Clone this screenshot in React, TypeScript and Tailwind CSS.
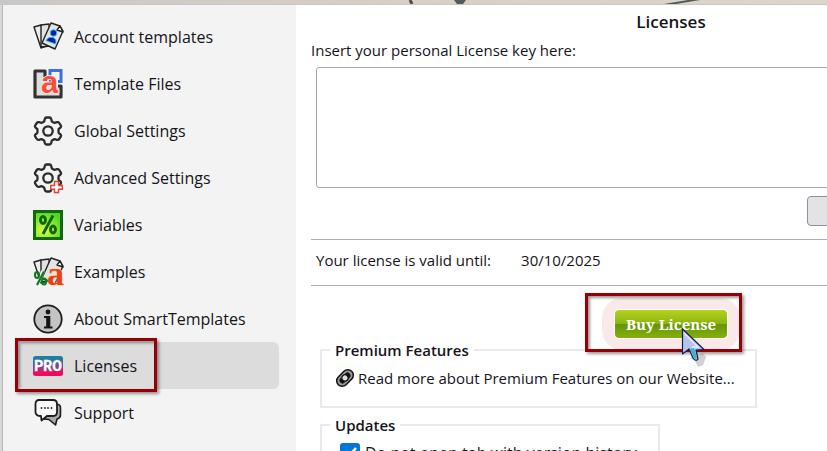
import type { ReactNode } from "react";

function Cards() {
  return (
    <g stroke="#222" strokeWidth="1.4" strokeLinejoin="round">
      <path d="M1 5L8 3L13 24L8 26Z" fill="#ececec" />
      <path d="M8 3L16 2L17 24L8 25Z" fill="#e2e2e2" />
      <path d="M18 1L27 4L30 9L22 27L9 21Z" fill="#e4e4e4" />
      <path d="M27 4L24 8L30 10Z" fill="#fff" />
    </g>
  );
}

function Svg({ children }: { children: ReactNode }) {
  return (
    <svg viewBox="0 0 30 30" className="size-[30px] shrink-0 overflow-visible" aria-hidden="true">
      {children}
    </svg>
  );
}

function AccountIcon() {
  return (
    <Svg>
      <Cards />
      <g fill="#0a1fa0" stroke="#20b8ee" strokeWidth="0.9">
        <circle cx="20.5" cy="11" r="3.2" />
        <path d="M13 18.500Q15.500 14 20 15.500Q24 17 22.500 22Z" />
      </g>
    </Svg>
  );
}

function FilesIcon() {
  return (
    <Svg>
      <path d="M2 2H13V8H17V17H28V28H2Z" fill="#ddd" />
      <path d="M12 8V2H2V28H28V17H25" fill="none" stroke="#333" strokeWidth="3.2" strokeLinejoin="round" />
      <path d="M17 8V1.500H28V12.500H25" fill="none" stroke="#3b74d0" strokeWidth="3" />
      <rect x="16" y="10" width="4" height="4" fill="#3b74d0" />
      <text x="8" y="23.500" fontFamily="Liberation Sans, sans-serif" fontWeight="700" fontSize="31" fill="#ff4b38" stroke="#f3f3f3" strokeWidth="1.500" paintOrder="stroke">a</text>
    </Svg>
  );
}

function GearShape() {
  return (
    <g fill="none" stroke="#2b2b2b" strokeWidth="2.3" strokeLinejoin="round">
      <path d="M13.500 1.500H16.500Q17.800 1.500 18.200 3L18.800 5.300Q20 6.400 21.500 6.800L24 6.200Q25.500 5.900 26.200 7L27.900 9.600Q28.500 10.800 27.500 11.600L25.700 13Q25.200 15 25.700 17L27.500 18.400Q28.500 19.200 27.900 20.400L26.200 23Q25.500 24.100 24 23.800L21.500 23.200Q20 23.600 18.800 24.700L18.200 27Q17.800 28.500 16.500 28.500H13.500Q12.200 28.500 11.800 27L11.200 24.700Q10 23.600 8.500 23.200L6 23.800Q4.500 24.100 3.800 23L2.100 20.400Q1.500 19.200 2.500 18.400L4.300 17Q4.800 15 4.300 13L2.500 11.600Q1.500 10.800 2.100 9.600L3.800 7Q4.500 5.900 6 6.200L8.500 6.800Q10 6.400 11.200 5.300L11.800 3Q12.200 1.500 13.500 1.500Z" />
      <circle cx="15" cy="15" r="4.700" />
    </g>
  );
}

function GearIcon() {
  return (
    <Svg>
      <GearShape />
    </Svg>
  );
}

function AdvancedIcon() {
  return (
    <Svg>
      <GearShape />
      <path d="M21.500 18.500H25.500V22.500H29.300V26.300H25.500V29.500H21.500V26.300H17.700V22.500H21.500Z" fill="#fff" stroke="#e2402e" strokeWidth="1.400" />
    </Svg>
  );
}

function VariablesIcon() {
  return (
    <Svg>
      <defs>
        <radialGradient id="lime" cx="0.350" cy="0.700" r="0.700">
          <stop offset="0" stopColor="#e0ff42" />
          <stop offset="1" stopColor="#55d622" />
        </radialGradient>
      </defs>
      <rect x="1.500" y="1.500" width="27" height="27" fill="url(#lime)" stroke="#12680f" strokeWidth="3" />
      <g fill="none" stroke="#0c6410" strokeWidth="2.900">
        <ellipse cx="10" cy="10" rx="2.500" ry="3.500" />
        <ellipse cx="20" cy="19.500" rx="2.500" ry="3.500" />
        <path d="M20 5.500L10 24" />
      </g>
    </Svg>
  );
}

function ExamplesIcon() {
  return (
    <Svg>
      <Cards />
      <path d="M10 14L4 28" fill="none" stroke="#f3f3f3" strokeWidth="4" />
      <g fill="none" stroke="#11791a" strokeWidth="2.200">
        <ellipse cx="4" cy="18" rx="2" ry="3" />
        <ellipse cx="11" cy="24.500" rx="2" ry="3" />
        <path d="M11 14.500L4 28" />
      </g>
      <text x="14" y="27.500" fontFamily="Liberation Serif, serif" fontWeight="700" fontSize="34" fill="#ef3d14" stroke="#fbd9a8" strokeWidth="1" paintOrder="stroke">a</text>
    </Svg>
  );
}

function AboutIcon() {
  return (
    <Svg>
      <circle cx="15" cy="15" r="13.700" fill="#c4c4c4" stroke="#1c1c1c" strokeWidth="1.800" />
      <circle cx="15" cy="8" r="2.400" fill="#151515" />
      <path d="M11 12H17.300V22.500H19.500V24.500H11V22.500H13.200V14H11Z" fill="#151515" />
    </Svg>
  );
}

function ProIcon() {
  return (
    <Svg>
      <defs>
        <linearGradient id="pro" x1="0" y1="0" x2="0" y2="1">
          <stop offset="0" stopColor="#068ca8" />
          <stop offset="0.500" stopColor="#7a4a8c" />
          <stop offset="0.850" stopColor="#f00a5c" />
        </linearGradient>
      </defs>
      <rect y="5" width="30" height="20" rx="2.500" fill="url(#pro)" />
      <text x="15" y="20" textAnchor="middle" fontFamily="Roboto, sans-serif" fontWeight="700" fontSize="14" fill="#fff" stroke="#fff" strokeWidth="0.400">PRO</text>
    </Svg>
  );
}

function SupportIcon() {
  return (
    <Svg>
      <path d="M23 6Q28 6 27.500 11V17Q27.500 20 24 21L22.500 27L16 21.500L11 21Z" fill="#aaa" stroke="#1e1e1e" strokeWidth="1.600" strokeLinejoin="round" />
      <path d="M6 2H20Q24 2 24 6V14Q24 18 20 18H14L8.500 22.500L8 18Q2.500 18 2.500 14V6Q2.500 2 6 2Z" fill="#fafafa" stroke="#1e1e1e" strokeWidth="1.800" strokeLinejoin="round" />
      <g fill="#222">
        <circle cx="8.500" cy="10" r="0.900" />
        <circle cx="12" cy="10" r="0.900" />
        <circle cx="15" cy="10" r="0.900" />
        <circle cx="18.500" cy="10" r="0.900" />
      </g>
    </Svg>
  );
}

const items = [
  { label: "Account templates", Icon: AccountIcon },
  { label: "Template Files", Icon: FilesIcon },
  { label: "Global Settings", Icon: GearIcon },
  { label: "Advanced Settings", Icon: AdvancedIcon },
  { label: "Variables", Icon: VariablesIcon },
  { label: "Examples", Icon: ExamplesIcon },
  { label: "About SmartTemplates", Icon: AboutIcon },
  { label: "Licenses", Icon: ProIcon, active: true },
  { label: "Support", Icon: SupportIcon },
];

function Backdrop() {
  return (
    <div className="h-[5px] shrink-0 overflow-hidden border-b border-[#c9c7c4] bg-linear-to-r from-[#c9c7c6] via-[#d8d0c4] to-[#dcd5c9]">
      <svg viewBox="0 0 827 4" className="h-1 w-[827px]" aria-hidden="true">
        <path d="M410 0L412 4" stroke="#4a4d52" strokeWidth="3" />
        <path d="M454 0H466L463 4H457Z" fill="#55585c" />
        <path d="M664 5L700 -1" stroke="#55585c" strokeWidth="2" />
      </svg>
    </div>
  );
}

function Pointer() {
  return (
    <svg viewBox="0 0 32 40" className="absolute top-[18px] left-[66px] h-10 w-8" aria-hidden="true">
      <path d="M9 30L15 27L22 25L25 29L22 37L17 39L14 33Z" fill="#777" opacity="0.350" />
      <path d="M1.500 1V26L8 21L12 30Q15 34 17 31L15 22L23 21.500Z" fill="#b4c4ec" stroke="#17194a" strokeWidth="1.200" strokeLinejoin="round" />
      <path d="M9 21L12.500 29Q14 32 16 30L13 20Z" fill="#35b8c8" />
      <path d="M3 5L17 19L11 19" fill="none" stroke="#e5eaff" strokeWidth="1.500" />
    </svg>
  );
}

export default function App() {
  return (
    <div className="flex h-screen flex-col overflow-hidden bg-white font-['Open_Sans','Noto_Sans',sans-serif] text-base leading-6 text-[#15141a]">
      <Backdrop />
      <div className="flex min-h-0 flex-1 overflow-hidden border-l-2 border-[#d8d8d8]">
        <nav className="w-[294px] shrink-0 border-l border-[#b9b9b9] bg-[#f3f3f3] pt-2 pr-[17px] pl-[15px]">
          {items.map(({ label, Icon, active }) => (
            <div key={label} className="relative">
              <button
                className={
                  active
                    ? "flex h-[47px] w-full items-center gap-[11px] rounded-md bg-[#dcdcdc] px-[15px] text-left"
                    : "flex h-[47px] w-full items-center gap-[11px] rounded-md px-[15px] text-left"
                }
              >
                <Icon />
                {label}
              </button>
              {active && (
                <div className="pointer-events-none absolute -top-1 -left-[3px] h-[54px] w-[142px] border-3 border-[#950006] shadow-[2px_2px_3px_rgba(0,0,0,0.4),inset_2px_2px_3px_rgba(0,0,0,0.4)]" />
              )}
            </div>
          ))}
        </nav>
        <main className="ml-[15px] min-w-[720px] flex-1 pt-[5px] text-[15px] leading-6">
          <h1 className="text-center text-[17px] leading-6 font-semibold">Licenses</h1>
          <label htmlFor="key" className="mt-1 block">
            Insert your personal License key here:
          </label>
          <div className="px-[5px] pt-[5px]">
            <textarea id="key" className="block h-[121px] w-full resize-none rounded-[3px] border border-[#a8a8ab] bg-white" />
          </div>
          <div className="mt-2 flex justify-end pr-[5px]">
            <button aria-label="Validate" className="h-[30px] w-[219px] rounded-sm border border-[#8f8f9d] bg-[#e3e3e6]" />
          </div>
          <div className="mt-[13px] flex h-[47px] items-center gap-[30px] border-y border-[#adadb0] px-[5px] pb-1.5">
            <span>Your license is valid until:</span>
            <span>30/10/2025</span>
          </div>
          <div className="flex justify-center pt-3">
            <div className="relative rounded-[20px] bg-[#f9e9e9] px-3 py-[11px]">
              <div className="pointer-events-none absolute -top-[5px] -left-[17px] h-[59px] w-[157px] border-3 border-[#950006] shadow-[2px_2px_3px_rgba(0,0,0,0.4),inset_2px_2px_3px_rgba(0,0,0,0.4)]" />
              <button className="relative block h-[30px] w-[114px] rounded-[5px] border border-white bg-[linear-gradient(#b4d21c,#8db512_48%,#669405_52%,#86b00e)] font-['Noto_Serif','DejaVu_Serif_Condensed','DejaVu_Serif',serif] text-[15px] leading-7 font-bold whitespace-nowrap text-white">
                Buy License
                <Pointer />
              </button>
            </div>
          </div>
          <fieldset className="-mt-3 ml-[9px] h-[70px] w-[437px] border-2 border-[#e8e8ee] px-[13px]">
            <legend className="-ml-[5px] px-[5px] font-semibold">Premium Features</legend>
            <a href="#premium" className="mt-1 flex items-center gap-[3px] whitespace-nowrap">
              <svg viewBox="0 0 20 20" className="size-5 shrink-0" aria-hidden="true">
                <g transform="rotate(-45 10 10)" fill="none">
                  <rect x="0.500" y="4.500" width="19" height="11" rx="5.500" fill="#999" stroke="#111" strokeWidth="1.500" />
                  <rect x="3.500" y="7" width="13" height="6" rx="3" fill="#111" />
                  <circle cx="10" cy="10" r="3.200" fill="#ddd" stroke="#111" strokeWidth="1.200" />
                </g>
              </svg>
              Read more about Premium Features on our Website...
            </a>
          </fieldset>
          <fieldset className="mt-[5px] ml-[9px] w-[340px] border-2 border-[#e8e8ee] px-[13px] pb-4">
            <legend className="-ml-[5px] px-[5px] font-semibold">Updates</legend>
            <label className="mt-1.5 ml-[5px] flex items-start gap-[5px] text-base leading-5 whitespace-nowrap">
              <span className="relative size-5 shrink-0">
                <input type="checkbox" defaultChecked className="block size-5 appearance-none rounded-[3px] bg-[#0078d7]" />
                <svg viewBox="0 0 20 20" className="pointer-events-none absolute inset-0" aria-hidden="true">
                  <path d="M4 10L8 14L16 5" fill="none" stroke="#fff" strokeWidth="2.500" />
                </svg>
              </span>
              Do not open tab with version history
            </label>
          </fieldset>
        </main>
      </div>
    </div>
  );
}
